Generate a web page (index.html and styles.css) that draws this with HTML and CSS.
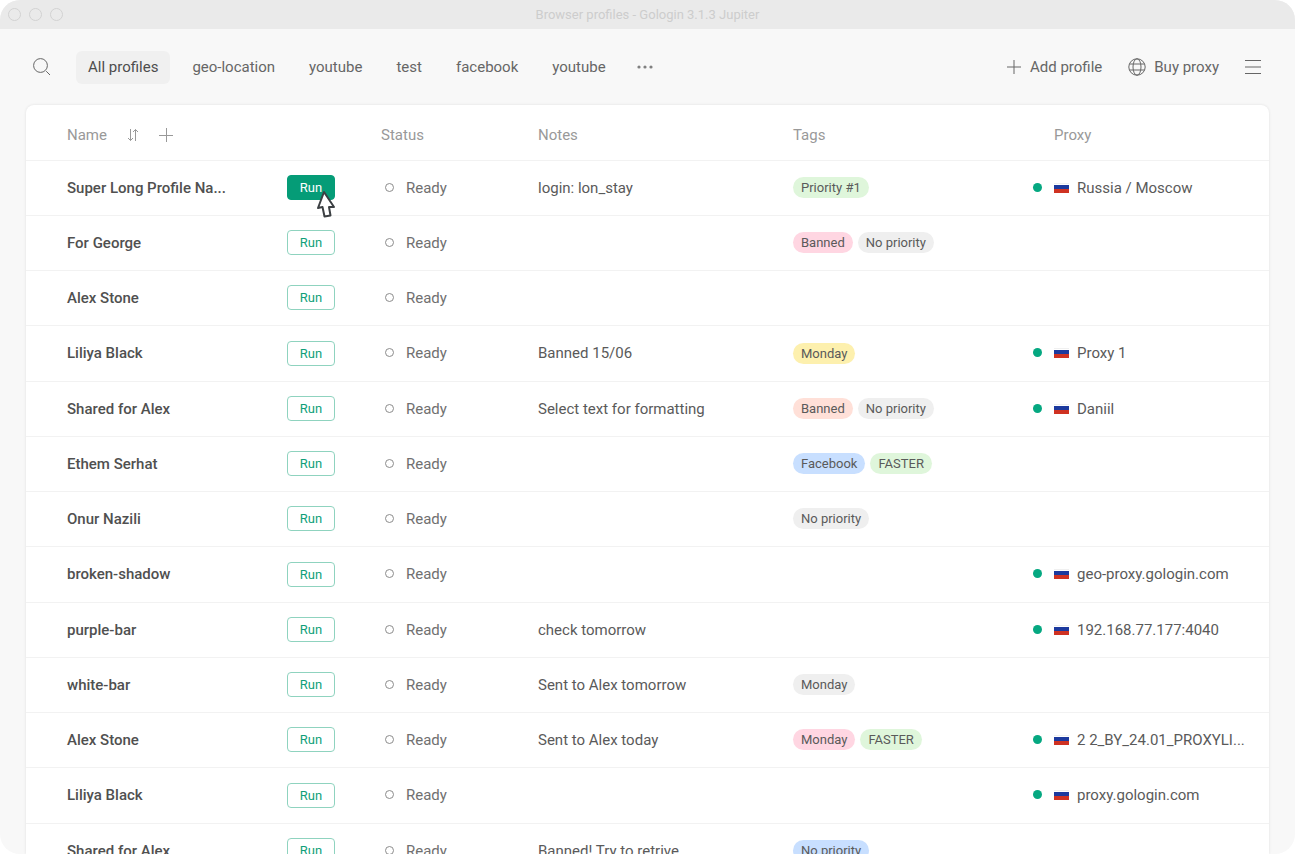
FILE: index.html
```html
<!DOCTYPE html>
<html lang="en">
  <head>
    <meta charset="UTF-8" />
    <meta name="viewport" content="width=device-width, initial-scale=1.0" />
    <title>Browser profiles</title>
    <link rel="stylesheet" href="styles.css" />
  </head>
  <body>
    <div class="window">
      <header class="titlebar">
        <div class="titlebar__dots"><i></i><i></i><i></i></div>
        <span class="titlebar__title">Browser profiles - Gologin 3.1.3 Jupiter</span>
      </header>

      <div class="toolbar">
        <button type="button" class="icon-btn search" aria-label="Search">
          <svg width="20" height="20" viewBox="0 0 20 20">
            <circle cx="8.5" cy="8.5" r="6.9" />
            <path d="M14.2 14.2l3.8 3.8" />
          </svg>
        </button>
        <nav class="tabs">
          <a href="#" class="active">All profiles</a>
          <a href="#">geo-location</a>
          <a href="#">youtube</a>
          <a href="#">test</a>
          <a href="#">facebook</a>
          <a href="#">youtube</a>
        </nav>
        <button type="button" class="icon-btn more" aria-label="More folders">
          <svg width="16" height="4" viewBox="0 0 16 4">
            <circle cx="2" cy="2" r="1.6" />
            <circle cx="8" cy="2" r="1.6" />
            <circle cx="14" cy="2" r="1.6" />
          </svg>
        </button>
        <div class="actions">
          <button type="button" class="action">
            <svg width="16" height="16" viewBox="0 0 16 16"><path d="M8 1v14M1 8h14" /></svg>
            Add profile
          </button>
          <button type="button" class="action">
            <svg width="18" height="18" viewBox="0 0 18 18">
              <circle cx="9" cy="9" r="8.2" />
              <ellipse cx="9" cy="9" rx="4" ry="8.2" />
              <path d="M1.6 6h14.8M1.6 12h14.8" />
            </svg>
            Buy proxy
          </button>
          <button type="button" class="icon-btn" aria-label="Menu">
            <svg width="16" height="16" viewBox="0 0 16 16"><path d="M0 1.5h16M0 8h16M0 14.5h16" /></svg>
          </button>
        </div>
      </div>

      <main class="card">
        <table class="profiles">
          <colgroup>
            <col class="col-name" />
            <col class="col-run" />
            <col class="col-status" />
            <col />
            <col class="col-tags" />
            <col class="col-proxy" />
          </colgroup>
          <thead>
            <tr>
              <th colspan="2">
                <div class="name-head">
                  Name
                  <button type="button" class="icon-btn sort" aria-label="Sort">
                    <svg width="12" height="14" viewBox="0 0 12 14">
                      <path d="M3.500 1v11.500M1 10l2.500 2.500L6 10M8.500 13V1.500M6 4l2.500-2.500L11 4" />
                    </svg>
                  </button>
                  <button type="button" class="icon-btn" aria-label="Add column">
                    <svg width="14" height="14" viewBox="0 0 14 14"><path d="M7.500 0v14M0 7.500h14" /></svg>
                  </button>
                </div>
              </th>
              <th>Status</th>
              <th>Notes</th>
              <th>Tags</th>
              <th class="proxy-head">Proxy</th>
            </tr>
          </thead>
          <tbody>
            <tr>
              <td class="name">Super Long Profile Na...</td>
              <td class="run-cell">
                <button type="button" class="run run--hover">Run</button>
                <svg class="cursor" width="20" height="28" viewBox="0 0 20 28">
                  <path d="M8 2L2 18l4.500-1L8.500 26.500l6-1L13 17h5z" />
                </svg>
              </td>
              <td class="status">Ready</td>
              <td>login: lon_stay</td>
              <td><span class="tag green">Priority #1</span></td>
              <td class="proxy"><i class="flag"></i>Russia / Moscow</td>
            </tr>
            <tr>
              <td class="name">For George</td>
              <td><button type="button" class="run">Run</button></td>
              <td class="status">Ready</td>
              <td></td>
              <td><span class="tag pink">Banned</span><span class="tag">No priority</span></td>
              <td></td>
            </tr>
            <tr>
              <td class="name">Alex Stone</td>
              <td><button type="button" class="run">Run</button></td>
              <td class="status">Ready</td>
              <td></td>
              <td></td>
              <td></td>
            </tr>
            <tr>
              <td class="name">Liliya Black</td>
              <td><button type="button" class="run">Run</button></td>
              <td class="status">Ready</td>
              <td>Banned 15/06</td>
              <td><span class="tag yellow">Monday</span></td>
              <td class="proxy"><i class="flag"></i>Proxy 1</td>
            </tr>
            <tr>
              <td class="name">Shared for Alex</td>
              <td><button type="button" class="run">Run</button></td>
              <td class="status">Ready</td>
              <td>Select text for formatting</td>
              <td><span class="tag peach">Banned</span><span class="tag">No priority</span></td>
              <td class="proxy"><i class="flag"></i>Daniil</td>
            </tr>
            <tr>
              <td class="name">Ethem Serhat</td>
              <td><button type="button" class="run">Run</button></td>
              <td class="status">Ready</td>
              <td></td>
              <td><span class="tag blue">Facebook</span><span class="tag green">FASTER</span></td>
              <td></td>
            </tr>
            <tr>
              <td class="name">Onur Nazili</td>
              <td><button type="button" class="run">Run</button></td>
              <td class="status">Ready</td>
              <td></td>
              <td><span class="tag">No priority</span></td>
              <td></td>
            </tr>
            <tr>
              <td class="name">broken-shadow</td>
              <td><button type="button" class="run">Run</button></td>
              <td class="status">Ready</td>
              <td></td>
              <td></td>
              <td class="proxy"><i class="flag"></i>geo-proxy.gologin.com</td>
            </tr>
            <tr>
              <td class="name">purple-bar</td>
              <td><button type="button" class="run">Run</button></td>
              <td class="status">Ready</td>
              <td>check tomorrow</td>
              <td></td>
              <td class="proxy"><i class="flag"></i>192.168.77.177:4040</td>
            </tr>
            <tr>
              <td class="name">white-bar</td>
              <td><button type="button" class="run">Run</button></td>
              <td class="status">Ready</td>
              <td>Sent to Alex tomorrow</td>
              <td><span class="tag">Monday</span></td>
              <td></td>
            </tr>
            <tr>
              <td class="name">Alex Stone</td>
              <td><button type="button" class="run">Run</button></td>
              <td class="status">Ready</td>
              <td>Sent to Alex today</td>
              <td><span class="tag pink">Monday</span><span class="tag green">FASTER</span></td>
              <td class="proxy"><i class="flag"></i>2 2_BY_24.01_PROXYLI...</td>
            </tr>
            <tr>
              <td class="name">Liliya Black</td>
              <td><button type="button" class="run">Run</button></td>
              <td class="status">Ready</td>
              <td></td>
              <td></td>
              <td class="proxy"><i class="flag"></i>proxy.gologin.com</td>
            </tr>
            <tr>
              <td class="name">Shared for Alex</td>
              <td><button type="button" class="run">Run</button></td>
              <td class="status">Ready</td>
              <td>Banned! Try to retrive</td>
              <td><span class="tag blue">No priority</span></td>
              <td></td>
            </tr>
          </tbody>
        </table>
      </main>
    </div>
  </body>
</html>
```
FILE: styles.css
```css
*,
*::before {
  box-sizing: border-box;
}

body {
  margin: 0;
  background: #fff;
  font-family: Roboto, "Liberation Sans", sans-serif;
  font-size: 15px;
  color: #5a5a5a;
}

button {
  font: inherit;
  color: inherit;
  cursor: pointer;
}

svg {
  display: block;
  fill: none;
  stroke: currentColor;
}

.window {
  display: flex;
  flex-direction: column;
  height: 100vh;
  overflow: hidden;
  border-radius: 20px;
  background: #f8f8f8;
}

/* title bar */
.titlebar {
  position: relative;
  display: flex;
  flex-shrink: 0;
  align-items: center;
  justify-content: center;
  height: 29px;
  background: #eaeaea;
}

.titlebar__dots {
  position: absolute;
  left: 8px;
  display: flex;
  gap: 8px;
}

.titlebar__dots i {
  width: 13px;
  height: 13px;
  border: 1px solid #d2d2d2;
  border-radius: 50%;
}

.titlebar__title {
  font-size: 13px;
  line-height: 29px;
  color: #cdcdcd;
}

/* toolbar */
.toolbar {
  display: flex;
  flex-shrink: 0;
  align-items: center;
  height: 76px;
  padding: 0 34px 0 32px;
  color: #666;
}

.icon-btn,
.action {
  display: flex;
  align-items: center;
  padding: 0;
  border: 0;
  background: none;
}

.tabs {
  display: flex;
  gap: 10px;
  margin-left: 24px;
}

.tabs a {
  padding: 0 12px;
  border-radius: 6px;
  line-height: 33px;
  color: #666;
  text-decoration: none;
}

.tabs .active {
  background: #f0f0f0;
  color: #4d4d4d;
}

.more {
  margin-left: 19px;
}

.more svg {
  fill: #808080;
  stroke: none;
}

.actions {
  display: flex;
  gap: 26px;
  margin-left: auto;
}

.action {
  gap: 8px;
}

/* profiles table */
.card {
  flex: 1;
  min-height: 0;
  margin: 0 26px;
  overflow: hidden;
  border-radius: 8px 8px 0 0;
  background: #fff;
  box-shadow: 0 0 3px rgba(0, 0, 0, 0.1);
}

.profiles {
  width: 100%;
  table-layout: fixed;
  border-collapse: separate;
  border-spacing: 0;
}

.col-name {
  width: 261px;
}

.col-run {
  width: 94px;
}

.col-status {
  width: 157px;
}

.col-tags {
  width: 240px;
}

.col-proxy {
  width: 236px;
}

.profiles th {
  height: 56px;
  padding: 4px 0 0;
  border-bottom: 1px solid #f2f2f2;
  font-weight: 400;
  text-align: left;
  color: #999;
}

.profiles td {
  height: 55px;
  padding: 0 0 1px;
  border-bottom: 1px solid #f2f2f2;
  white-space: nowrap;
}

.profiles tr:nth-child(4n) td {
  height: 56px;
}

.profiles th:first-child,
.profiles .name {
  padding-left: 41px;
}

.profiles .name {
  padding-right: 48px;
  overflow: hidden;
  font-weight: 500;
  text-overflow: ellipsis;
  color: #505050;
}

.profiles .proxy-head {
  padding-left: 21px;
}

.name-head {
  display: flex;
  align-items: center;
}

.sort {
  margin: 0 20px;
}

.run-cell {
  position: relative;
}

.run {
  display: block;
  width: 48px;
  height: 25px;
  padding: 0;
  border: 1px solid #8fd3bf;
  border-radius: 4px;
  background: #fff;
  font-size: 13px;
  line-height: 23px;
  color: #109f7a;
}

.run--hover {
  border-color: #059c77;
  background: #059c77;
  color: #fff;
}

.cursor {
  position: absolute;
  top: 29px;
  left: 29px;
  fill: #fff;
  stroke: #3c4043;
  stroke-width: 2;
  stroke-linejoin: round;
}

.status {
  color: #707070;
}

.status::before {
  content: "";
  display: inline-block;
  width: 9px;
  height: 9px;
  margin: 0 12px 1px 4px;
  border: 1px solid #8c8c8c;
  border-radius: 50%;
}

.tag {
  display: inline-block;
  margin-right: 5px;
  padding: 0 8px;
  border-radius: 11px;
  background: #efefef;
  font-size: 13px;
  line-height: 21px;
  vertical-align: middle;
}

.green {
  background: #dff6db;
}

.pink {
  background: #ffd6e2;
}

.yellow {
  background: #fdf0ae;
}

.peach {
  background: #ffe0d8;
}

.blue {
  background: #c8dfff;
}

.proxy::before {
  content: "";
  display: inline-block;
  width: 9px;
  height: 9px;
  margin-right: 12px;
  margin-bottom: 1px;
  border-radius: 50%;
  background: #05a881;
}

.flag {
  display: inline-block;
  width: 15px;
  height: 10px;
  margin-right: 8px;
  border-top: 1px solid #f0f0f0;
  background: linear-gradient(#fff 1px, #1c3a9e 1px 5px, #cf3222 5px);
}
```
